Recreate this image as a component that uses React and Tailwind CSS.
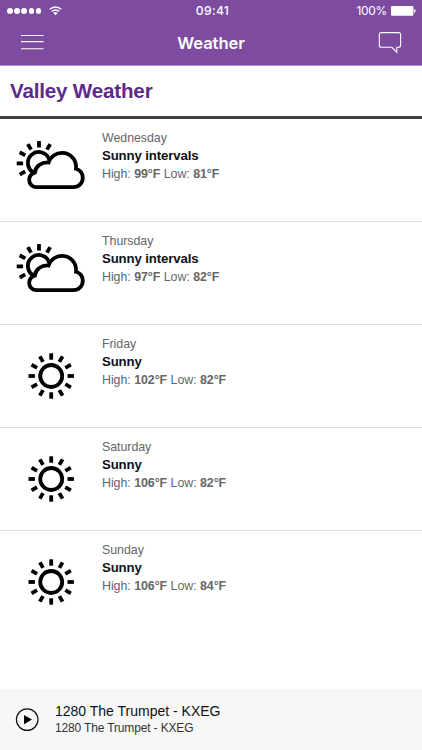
const forecast = [
  { day: "Wednesday", summary: "Sunny intervals", high: 99, low: 81, icon: "intervals" },
  { day: "Thursday", summary: "Sunny intervals", high: 97, low: 82, icon: "intervals" },
  { day: "Friday", summary: "Sunny", high: 102, low: 82, icon: "sunny" },
  { day: "Saturday", summary: "Sunny", high: 106, low: 82, icon: "sunny" },
  { day: "Sunday", summary: "Sunny", high: 106, low: 84, icon: "sunny" },
];

function SunnyIcon() {
  return (
    <svg width="102" height="102" viewBox="0 0 102 102" fill="none" stroke="#000" strokeWidth="3.8">
      <circle cx="51.2" cy="51" r="11" />
      {[0, 30, 60, 90, 120, 150, 180, 210, 240, 270, 300, 330].map((angle) => (
        <path key={angle} d="M51.2 28.3v6.4" transform={`rotate(${angle} 51.2 51)`} />
      ))}
    </svg>
  );
}

function IntervalsIcon() {
  return (
    <svg width="102" height="102" viewBox="0 0 102 102" fill="none" stroke="#000" strokeWidth="3.8">
      <path d="M34.2 53.8A10.9 10.9 0 1 1 49.3 41" />
      <path d="M36.6 68.2C32.5 68.2 29.2 65 29.2 61C29.2 57.6 31.4 54.8 34.8 53.8C35.4 47.5 41.5 43 48.6 43.5C50.4 37.8 55.8 33.9 62 33.9C70.3 33.9 77 40.8 76 49.8C80.3 51.2 82.8 54.4 82.8 58.8C82.8 64 78.8 68.2 73.4 68.2Z" />
      {[-120, -90, -60, -30, 0, 30].map((angle) => (
        <path key={angle} d="M39 22.1v6.4" transform={`rotate(${angle} 39 44.4)`} />
      ))}
    </svg>
  );
}

function StatusBar() {
  return (
    <div className="grid h-[22px] grid-cols-3 items-center pl-[7px] pr-[6px]">
      <div className="flex items-center gap-2">
        <div className="flex gap-[1.6px]">
          {[1, 2, 3, 4, 5].map((dot) => (
            <span key={dot} className="size-[5.6px] rounded-full bg-white" />
          ))}
        </div>
        <svg width="13" height="10" viewBox="0 0 13 10" fill="none" stroke="#fff" strokeWidth="1.6">
          <path d="M.9 3.3a8 8 0 0 1 11.2 0M2.9 5.5a5.1 5.1 0 0 1 7.2 0" />
          <path d="M4.4 7.1a3 3 0 0 1 4.2 0L6.5 9.3z" fill="#fff" stroke="none" />
        </svg>
      </div>
      <span className="pl-[2px] text-center text-[12.2px] font-medium tracking-[0.3px]">09:41</span>
      <div className="flex items-center justify-end gap-[4px]">
        <span className="text-[12px] tracking-[-0.3px]">100%</span>
        <svg width="25" height="10" viewBox="0 0 25 10" fill="#fff">
          <rect x="0" y="0" width="22.4" height="9.8" rx="1" />
          <path d="M23 3.2c1.2.3 1.6.9 1.6 1.7s-.4 1.4-1.6 1.7z" />
        </svg>
      </div>
    </div>
  );
}

export default function App() {
  return (
    <div className="flex h-[750px] w-[422px] flex-col overflow-hidden bg-white font-['Liberation_Sans',Arial,sans-serif]">
      <header className="h-[66px] shrink-0 border-b border-[#b190c4] bg-[#7d4b9f] font-['Inter',sans-serif] text-white">
        <StatusBar />
        <div className="flex h-[42px] items-center justify-between pl-[21px] pr-5">
          <svg width="23" height="16" viewBox="0 0 23 16" stroke="#fff" strokeWidth="1.1">
            <path d="M0 .5h22.5M0 6.6h22.5M0 13.8h22.5" />
          </svg>
          <h1 className="pt-px text-[16.6px] font-semibold tracking-[-0.1px]">Weather</h1>
          <svg width="24" height="22" viewBox="0 0 24 22" fill="none" stroke="#fff" strokeWidth="1.1">
            <path d="M3.3.6h17.3a2 2 0 0 1 2 2v10.7a2 2 0 0 1-2 2h-1.8v4.8l-5-4.8H3.3a2 2 0 0 1-2-2V2.6a2 2 0 0 1 2-2z" />
          </svg>
        </div>
      </header>

      <div className="h-[53px] shrink-0 border-b-[3px] border-[#404040] px-[10px] pt-3">
        <h2 className="text-[20.6px] leading-[26px] font-bold tracking-[-0.18px] text-[#5c2a88]">Valley Weather</h2>
      </div>

      <main className="flex-1">
        {forecast.map((item) => (
          <section key={item.day} className="flex h-[102.9px] border-b border-[#e0e0e0] last:border-b-0">
            {item.icon === "sunny" ? <SunnyIcon /> : <IntervalsIcon />}
            <div className="pt-[10px] text-[12.4px] leading-[18px] tracking-[-0.04px] text-[#666]">
              <p>{item.day}</p>
              <p className="text-[13.2px] leading-[18px] font-bold tracking-[-0.12px] text-[#111]">{item.summary}</p>
              <p>
                High: <b>{item.high}°F</b> Low: <b>{item.low}°F</b>
              </p>
            </div>
          </section>
        ))}
      </main>

      <footer className="flex h-[61px] shrink-0 items-center gap-4 bg-[#f7f7f7] pl-[15px] text-[#111]">
        <svg width="24" height="24" viewBox="0 0 24 24">
          <circle cx="12.2" cy="11.6" r="10.8" fill="none" stroke="#111" strokeWidth="1.2" />
          <path d="M9 6.9v9.4l8-4.7z" fill="#000" />
        </svg>
        <div>
          <p className="text-[14px] leading-[18px]">1280 The Trumpet - KXEG</p>
          <p className="text-[12px] leading-[17px] tracking-[-0.15px] text-[#333]">1280 The Trumpet - KXEG</p>
        </div>
      </footer>
    </div>
  );
}
